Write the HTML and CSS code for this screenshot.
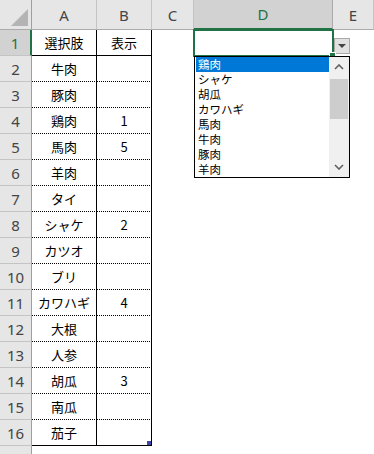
FILE: index.html
```html
<!DOCTYPE html>
<html>
<head>
    <title>選択肢</title>
    <link rel="stylesheet" href="styles.css">
</head>
<body>
    <div class="sheet">
        <div class="corner"><span class="tri"></span></div>
        <div class="col-head">A</div>
        <div class="col-head">B</div>
        <div class="col-head">C</div>
        <div class="col-head sel">D</div>
        <div class="col-head">E</div>

        <div class="row-head sel">1</div>
        <div class="cell a first">選択肢</div>
        <div class="cell b first">表示</div>
        <div class="cell"></div>
        <div class="cell d1"><span class="handle"></span></div>
        <div class="cell"></div>

        <div class="row-head">2</div><div class="cell a">牛肉</div><div class="cell b"></div><div class="cell"></div><div class="cell"></div><div class="cell"></div>
        <div class="row-head">3</div><div class="cell a">豚肉</div><div class="cell b"></div><div class="cell"></div><div class="cell"></div><div class="cell"></div>
        <div class="row-head">4</div><div class="cell a">鶏肉</div><div class="cell b">1</div><div class="cell"></div><div class="cell"></div><div class="cell"></div>
        <div class="row-head">5</div><div class="cell a">馬肉</div><div class="cell b">5</div><div class="cell"></div><div class="cell"></div><div class="cell"></div>
        <div class="row-head">6</div><div class="cell a">羊肉</div><div class="cell b"></div><div class="cell"></div><div class="cell"></div><div class="cell"></div>
        <div class="row-head">7</div><div class="cell a">タイ</div><div class="cell b"></div><div class="cell"></div><div class="cell"></div><div class="cell"></div>
        <div class="row-head">8</div><div class="cell a">シャケ</div><div class="cell b">2</div><div class="cell"></div><div class="cell"></div><div class="cell"></div>
        <div class="row-head">9</div><div class="cell a">カツオ</div><div class="cell b"></div><div class="cell"></div><div class="cell"></div><div class="cell"></div>
        <div class="row-head">10</div><div class="cell a">ブリ</div><div class="cell b"></div><div class="cell"></div><div class="cell"></div><div class="cell"></div>
        <div class="row-head">11</div><div class="cell a">カワハギ</div><div class="cell b">4</div><div class="cell"></div><div class="cell"></div><div class="cell"></div>
        <div class="row-head">12</div><div class="cell a">大根</div><div class="cell b"></div><div class="cell"></div><div class="cell"></div><div class="cell"></div>
        <div class="row-head">13</div><div class="cell a">人参</div><div class="cell b"></div><div class="cell"></div><div class="cell"></div><div class="cell"></div>
        <div class="row-head">14</div><div class="cell a">胡瓜</div><div class="cell b">3</div><div class="cell"></div><div class="cell"></div><div class="cell"></div>
        <div class="row-head">15</div><div class="cell a">南瓜</div><div class="cell b"></div><div class="cell"></div><div class="cell"></div><div class="cell"></div>
        <div class="row-head">16</div><div class="cell a last">茄子</div><div class="cell b last"><span class="resize"></span></div><div class="cell"></div><div class="cell"></div><div class="cell"></div>
        <div class="row-head">17</div><div class="cell"></div><div class="cell"></div><div class="cell"></div><div class="cell"></div><div class="cell"></div>

        <!-- dropdown of D1 -->
        <div class="drop-btn">
            <svg width="8" height="4" viewBox="0 0 8 4"><polygon points="0,0 8,0 4,4" fill="#444"/></svg>
        </div>
        <div class="dropdown">
            <ul class="items">
                <li class="active">鶏肉</li>
                <li>シャケ</li>
                <li>胡瓜</li>
                <li>カワハギ</li>
                <li>馬肉</li>
                <li>牛肉</li>
                <li>豚肉</li>
                <li>羊肉</li>
            </ul>
            <div class="scrollbar">
                <div class="arrow">
                    <svg width="10" height="6" viewBox="0 0 10 6"><polyline points="1,5 5,1 9,5" fill="none" stroke="#606060" stroke-width="1.6"/></svg>
                </div>
                <div class="track"><div class="thumb"></div></div>
                <div class="arrow">
                    <svg width="10" height="6" viewBox="0 0 10 6"><polyline points="1,1 5,5 9,1" fill="none" stroke="#606060" stroke-width="1.6"/></svg>
                </div>
            </div>
        </div>
    </div>
</body>
</html>
```

FILE: styles.css
```css
body {
    margin: 0;
    width: 374px;
    height: 454px;
    overflow: hidden;
    background: #fff;
    font-family: "Noto Sans CJK JP", "Noto Sans", sans-serif;
}

.sheet {
    position: relative;
    display: grid;
    grid-template-columns: 32px 65px 55px 42px 139px 41px;
    grid-template-rows: 30px repeat(17, 26px);
}

.corner {
    position: relative;
    background: #e6e6e6;
    border-right: 1px solid #9f9f9f;
    border-bottom: 1px solid #ababab;
}

.corner .tri {
    position: absolute;
    right: 3px;
    bottom: 3px;
    width: 0;
    height: 0;
    border-left: 17px solid transparent;
    border-bottom: 17px solid #b4b4b4;
}

.col-head {
    background: #e6e6e6;
    border-right: 1px solid #c4c4c4;
    border-bottom: 1px solid #ababab;
    display: flex;
    justify-content: center;
    align-items: center;
    font-family: "Noto Sans", sans-serif;
    font-size: 15px;
    color: #444;
}

.col-head.sel {
    background: #d2d2d2;
    color: #217346;
    border-right-color: #aaaaaa;
    border-bottom: 2px solid #217346;
}

.row-head {
    background: #e6e6e6;
    border-right: 1px solid #9f9f9f;
    border-bottom: 1px solid #c4c4c4;
    display: flex;
    justify-content: center;
    align-items: center;
    font-family: "Noto Sans", sans-serif;
    font-size: 15px;
    color: #444;
}

.row-head.sel {
    background: #d2d2d2;
    color: #217346;
    border-right: 2px solid #217346;
}

.cell {
    display: flex;
    justify-content: center;
    align-items: center;
    font-size: 13px;
    line-height: 1;
    color: #000;
}

.cell.a,
.cell.b {
    border-right: 1px solid #000;
    border-bottom: 1px dotted #000;
}

.cell.first,
.cell.last {
    border-bottom: 1px solid #000;
}

.cell.b {
    position: relative;
}

.resize {
    position: absolute;
    right: 0;
    bottom: 0;
    width: 4px;
    height: 4px;
    background: #3f48a8;
}

.d1 {
    position: relative;
}

.d1::after {
    content: "";
    position: absolute;
    top: -1px;
    left: -1px;
    right: -1px;
    bottom: -1px;
    border: 2px solid #217346;
}

.d1 .handle {
    position: absolute;
    right: -3px;
    bottom: -3px;
    width: 5px;
    height: 5px;
    background: #217346;
    border: 1px solid #fff;
    z-index: 1;
}

.drop-btn {
    position: absolute;
    left: 334px;
    top: 38px;
    width: 14px;
    height: 14px;
    background: #e1e1e1;
    border: 1px solid #a9a9a9;
    display: flex;
    justify-content: center;
    align-items: center;
}

.dropdown {
    position: absolute;
    left: 194px;
    top: 56px;
    width: 154px;
    height: 120px;
    background: #fff;
    border: 1px solid #000;
    display: flex;
    z-index: 2;
}

.items {
    list-style: none;
    margin: 0;
    padding: 0 0 0 1px;
    flex: 1;
    font-size: 11.5px;
    line-height: 15px;
    color: #000;
}

.items li {
    padding-left: 2px;
    height: 15px;
    overflow: hidden;
}

.items li.active {
    background: #0078d7;
    color: #fff;
}

.scrollbar {
    width: 20px;
    background: #f0f0f0;
    display: flex;
    flex-direction: column;
}

.arrow {
    height: 20px;
    display: flex;
    justify-content: center;
    align-items: center;
}

.track {
    flex: 1;
    padding: 2px 1px;
}

.thumb {
    height: 40px;
    background: #cdcdcd;
}
```
